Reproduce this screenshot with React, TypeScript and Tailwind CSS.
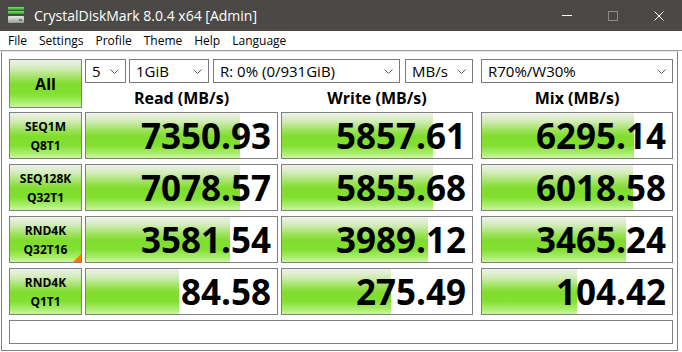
import React from 'react'

const GREEN =
  'bg-[linear-gradient(to_bottom,#eef1ec_0%,#d2ecb8_18%,#9fe25e_38%,#80dd2e_52%,#82e030_72%,#a6ec6a_88%,#c9f5a2_100%)]'

const rows = [
  { l1: 'SEQ1M', l2: 'Q8T1', v: [['7350.93', 80.6], ['5857.61', 79.5], ['6295.14', 80]] },
  { l1: 'SEQ128K', l2: 'Q32T1', v: [['7078.57', 80.6], ['5855.68', 79.5], ['6018.58', 79.5]] },
  { l1: 'RND4K', l2: 'Q32T16', tri: true, v: [['3581.54', 75.4], ['3989.12', 76.8], ['3465.24', 75.8]] },
  { l1: 'RND4K', l2: 'Q1T1', v: [['84.58', 48.6], ['275.49', 57.3], ['104.42', 50.2]] },
] as { l1: string; l2: string; tri?: boolean; v: [string, number][] }[]

const Chevron = () => (
  <svg width="9" height="5" viewBox="0 0 9 5" className="shrink-0">
    <polyline points="0.5,0.5 4.5,4.5 8.5,0.5" fill="none" stroke="#5a5a5a" strokeWidth="1" />
  </svg>
)

const Select = ({ text, w }: { text: string; w: string }) => (
  <div className={`${w} h-[24px] border border-[#7a7a7a] bg-white flex items-center justify-between pl-[6px] pr-[6px] text-[15px] text-black leading-none`}>
    <span>{text}</span>
    <Chevron />
  </div>
)

const Value = ({ text, pct, w }: { text: string; pct: number; w: string }) => (
  <div className={`${w} h-[47px] border border-[#808080] bg-white relative flex items-center justify-end pr-[6px]`}>
    <div className={`absolute left-0 top-0 bottom-0 ${GREEN}`} style={{ width: `${pct}%` }} />
    <span className="relative text-[35px] font-bold leading-none text-black">{text}</span>
  </div>
)

const TitleIcon = () => (
  <svg width="16" height="17" viewBox="0 0 16 17">
    <defs>
      <linearGradient id="tg" x1="0" y1="0" x2="0" y2="1">
        <stop offset="0" stopColor="#7fe06a" />
        <stop offset="1" stopColor="#2e9e3a" />
      </linearGradient>
      <linearGradient id="bg" x1="0" y1="0" x2="0" y2="1">
        <stop offset="0" stopColor="#e8e8e8" />
        <stop offset="1" stopColor="#9a9a9a" />
      </linearGradient>
    </defs>
    <rect x="0" y="0" width="16" height="3" fill="url(#tg)" />
    <rect x="0" y="4" width="16" height="3" fill="url(#tg)" />
    <rect x="0" y="9" width="16" height="7" rx="1" fill="url(#bg)" />
    <rect x="11" y="12" width="3" height="2" fill="#3aa040" />
  </svg>
)

export default function App() {
  return (
    <div className="w-[682px] h-[352px] bg-white overflow-hidden flex flex-col font-['Open_Sans',sans-serif]">
      {/* title bar */}
      <div className="h-[31px] bg-[#4b4946] flex items-center shrink-0">
        <div className="pl-[8px] pr-[10px] flex items-center">
          <TitleIcon />
        </div>
        <span className="text-white text-[14px]">CrystalDiskMark 8.0.4 x64 [Admin]</span>
        <div className="ml-auto flex items-center h-full">
          <div className="w-[46px] h-full flex items-center justify-center">
            <div className="w-[10px] h-px bg-white" />
          </div>
          <div className="w-[46px] h-full flex items-center justify-center">
            <div className="w-[10px] h-[10px] border border-[#8a8a8a]" />
          </div>
          <div className="w-[46px] h-full flex items-center justify-center">
            <svg width="10" height="10" viewBox="0 0 10 10">
              <path d="M0.5 0.5 L9.5 9.5 M9.5 0.5 L0.5 9.5" stroke="#fff" strokeWidth="1" />
            </svg>
          </div>
        </div>
      </div>

      {/* menu */}
      <div className="h-[20px] border-b border-[#a0a0a0] flex items-center gap-[12px] pl-[8px] text-[12px] text-black shrink-0">
        <span>File</span>
        <span>Settings</span>
        <span>Profile</span>
        <span>Theme</span>
        <span>Help</span>
        <span>Language</span>
      </div>

      {/* main frame */}
      <div className="ml-[1px] w-[677px] h-[300px] border-t border-t-[#e3e3e3] border-x border-b border-[#808080] pl-[7px] pt-[7px] flex flex-col">
        <div className="flex h-[49px]">
          <div className={`w-[73px] h-[49px] border border-[#808080] ${GREEN} flex items-center justify-center text-[16px] font-bold text-black`}>
            All
          </div>
          <div className="flex flex-col ml-[3px]">
            <div className="flex items-center">
              <Select text="5" w="w-[41px]" />
              <div className="w-[3px]" />
              <Select text="1GiB" w="w-[80px]" />
              <div className="w-[4px]" />
              <Select text="R: 0% (0/931GiB)" w="w-[187px]" />
              <div className="w-[5px]" />
              <Select text="MB/s" w="w-[68px]" />
              <div className="w-[8px]" />
              <Select text="R70%/W30%" w="w-[192px]" />
            </div>
            <div className="flex items-end h-[25px] text-[16px] font-bold text-black leading-[20px]">
              <div className="w-[193px] text-center">Read (MB/s)</div>
              <div className="w-[3px]" />
              <div className="w-[192px] text-center">Write (MB/s)</div>
              <div className="w-[8px]" />
              <div className="w-[192px] text-center">Mix (MB/s)</div>
            </div>
          </div>
        </div>

        <div className="flex flex-col gap-[5px] mt-[4px]">
          {rows.map((r, i) => (
            <div key={i} className="flex">
              <div className={`relative w-[73px] h-[47px] border border-[#808080] ${GREEN} flex flex-col items-center justify-center text-[12px] font-bold leading-[19px] text-black`}>
                <span>{r.l1}</span>
                <span>{r.l2}</span>
                {r.tri && (
                  <svg width="8" height="8" viewBox="0 0 8 8" className="absolute right-0 bottom-0">
                    <polygon points="8,0 8,8 0,8" fill="#ff7a00" />
                  </svg>
                )}
              </div>
              <div className="w-[3px]" />
              <Value text={r.v[0][0]} pct={r.v[0][1]} w="w-[193px]" />
              <div className="w-[3px]" />
              <Value text={r.v[1][0]} pct={r.v[1][1]} w="w-[192px]" />
              <div className="w-[8px]" />
              <Value text={r.v[2][0]} pct={r.v[2][1]} w="w-[192px]" />
            </div>
          ))}
        </div>

        <div className="mt-[5px] w-[664px] h-[24px] border border-[#808080] bg-white" />
      </div>
    </div>
  )
}
